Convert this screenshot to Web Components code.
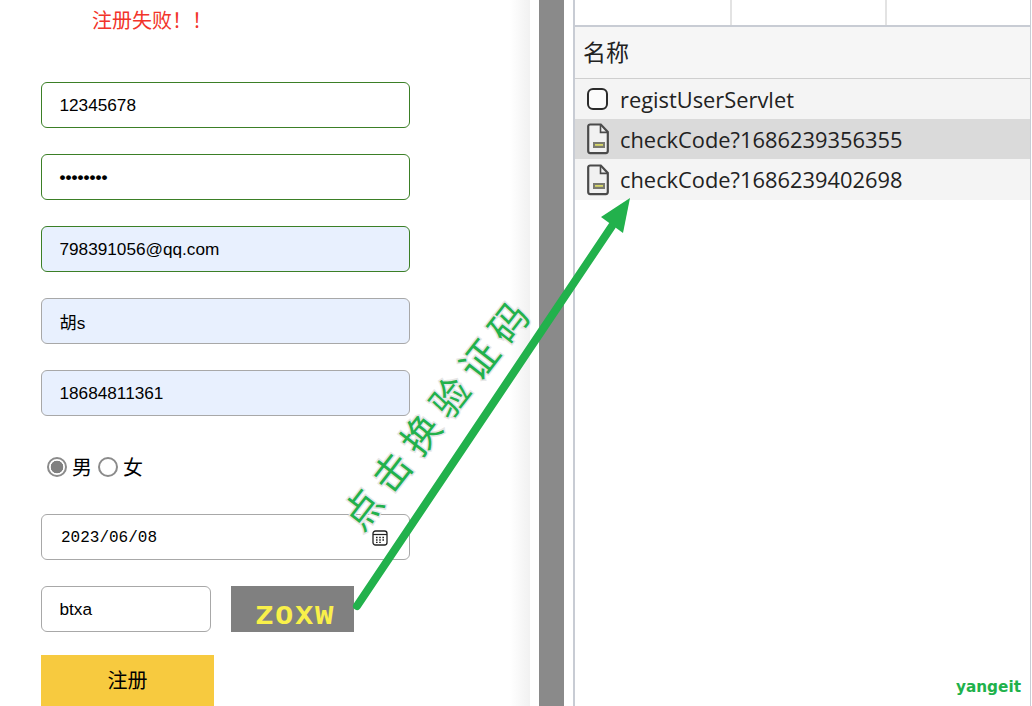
<!DOCTYPE html>
<html lang="zh">
<head>
<meta charset="utf-8">
<title>注册</title>
<style>
    html, body { margin: 0; height: 706px; overflow: hidden; background: #fff; }
</style>
</head>
<body>
<app-shell>
    <reg-panel slot="left">
        <reg-field tone="ok">12345678</reg-field>
        <reg-field tone="ok" kind="secret">••••••••</reg-field>
        <reg-field tone="ok" filled>798391056@qq.com</reg-field>
        <reg-field filled>胡s</reg-field>
        <reg-field filled>18684811361</reg-field>
        <reg-gender></reg-gender>
        <reg-field kind="date">2023/06/08</reg-field>
        <reg-captcha></reg-captcha>
        <reg-button>注册</reg-button>
    </reg-panel>
    <net-panel slot="right">
        <net-row icon="box">registUserServlet</net-row>
        <net-row icon="doc" selected>checkCode?1686239356355</net-row>
        <net-row icon="doc">checkCode?1686239402698</net-row>
    </net-panel>
</app-shell>
<arrow-note></arrow-note>

<script>
const CJK = '"Liberation Sans", "Noto Sans CJK SC", sans-serif';

class AppShell extends HTMLElement {
    connectedCallback() {
        this.attachShadow({ mode: 'open' });
        this.shadowRoot.innerHTML = `
            <style>
                :host { display: flex; height: 706px; font-family: ${CJK}; color: #000; }
                .left { width: 510px; flex: none; }
                .fade { width: 20px; flex: none; background: linear-gradient(90deg, #fff, #f1f1f1); }
                .gap { width: 9px; flex: none; background: #fff; }
                .bar { width: 25px; flex: none; background: #8a8a8a; }
                .right { flex: 1; min-width: 0; display: flex; }
            </style>
            <div class="left"><slot name="left"></slot></div>
            <div class="fade"></div>
            <div class="gap"></div>
            <div class="bar"></div>
            <div class="gap"></div>
            <div class="right"><slot name="right"></slot></div>
        `;
    }
}

class RegPanel extends HTMLElement {
    connectedCallback() {
        this.attachShadow({ mode: 'open' });
        this.shadowRoot.innerHTML = `
            <style>
                :host { display: block; width: 369px; padding-left: 41px; }
                .msg { height: 42px; line-height: 43px; margin-bottom: 40px; padding-left: 51px;
                    color: #f2342a; font-size: 20px; }
                .form { display: flex; flex-direction: column; gap: 26px; }
            </style>
            <div class="msg">注册失败！！</div>
            <div class="form"><slot></slot></div>
        `;
    }
}

class RegField extends HTMLElement {
    connectedCallback() {
        const kind = this.getAttribute('kind');
        const tone = this.getAttribute('tone') === 'ok' ? '#3b7f26' : '#a8a8a8';
        const bg = this.hasAttribute('filled') ? '#e8f0fe' : '#fff';
        this.attachShadow({ mode: 'open' });
        this.shadowRoot.innerHTML = `
            <style>
                :host { display: flex; align-items: center; justify-content: space-between; box-sizing: border-box;
                    height: 46px; padding: 1px 22px 0 17.5px; border: 1px solid ${tone}; border-radius: 6px;
                    background: ${bg}; font-size: 17.2px; }
                :host([kind="date"]) { font-family: "Liberation Mono", monospace; font-size: 16px; padding: 2px 22px 0 19px; }
                :host([kind="secret"]) { font-weight: bold; }
                svg { display: block; flex: none; }
            </style>
            <slot></slot>
            ${kind === 'date' ? `
            <svg width="16" height="16" viewBox="0 0 16 16" style="margin-right:-1px">
                <rect x="1" y="1" width="14" height="14" rx="2.5" fill="none" stroke="#222" stroke-width="1.3"/>
                <path d="M1 4.5h14" stroke="#222" stroke-width="1.2"/>
                <path d="M4 7.5h1.6M7.2 7.5h1.6M10.4 7.5h1.6M4 10h1.6M7.2 10h1.6M10.4 10h1.6M4 12.4h1.6M7.2 12.4h1.6" stroke="#222" stroke-width="1.4"/>
            </svg>` : ''}
        `;
    }
}

class RegGender extends HTMLElement {
    connectedCallback() {
        this.attachShadow({ mode: 'open' });
        this.shadowRoot.innerHTML = `
            <style>
                :host { display: flex; align-items: center; height: 46px; padding: 2px 0 0 6px; box-sizing: content-box;
                    margin-bottom: -2px; font-size: 20px; gap: 5px; }
                i { display: block; box-sizing: border-box; width: 20px; height: 20px; border: 2px solid #8b8b8b;
                    border-radius: 50%; background: #fff; }
                i.on { background: radial-gradient(circle, #808080 0 6px, #fff 6.6px); }
                span { margin: -2px 1px 0 0; }
            </style>
            <i class="on"></i><span>男</span>
            <i></i><span>女</span>
        `;
    }
}

class RegCaptcha extends HTMLElement {
    connectedCallback() {
        this.attachShadow({ mode: 'open' });
        this.shadowRoot.innerHTML = `
            <style>
                :host { display: flex; gap: 20px; height: 46px; }
                reg-field { width: 170px; }
                .code { width: 123px; height: 46px; box-sizing: border-box; padding: 15px 0 0 24px; background: #808080;
                    overflow: hidden; }
                .code span { display: block; color: #f9f04a; white-space: nowrap; transform: scaleX(1.27);
                    transform-origin: left; font: bold 24px/30px "DejaVu Sans Mono", monospace; letter-spacing: 1.3px; }
            </style>
            <reg-field>btxa</reg-field>
            <div class="code"><span>ZOXW</span></div>
        `;
    }
}

class RegButton extends HTMLElement {
    connectedCallback() {
        this.attachShadow({ mode: 'open' });
        this.shadowRoot.innerHTML = `
            <style>
                :host { display: flex; align-items: center; justify-content: center; box-sizing: border-box;
                    width: 173px; height: 51px; padding-bottom: 2px; margin-top: -3px; background: #f7ca3f; font-size: 20px; }
            </style>
            <slot></slot>
        `;
    }
}

class NetPanel extends HTMLElement {
    connectedCallback() {
        this.attachShadow({ mode: 'open' });
        this.shadowRoot.innerHTML = `
            <style>
                :host { display: flex; flex-direction: column; flex: 1; box-sizing: border-box; height: 706px;
                    border-left: 2px solid #c8ccd4; border-right: 1px solid #c8ccd4; margin-right: 1px;
                    background: #fff; color: #222; font-family: "Open Sans", "Noto Sans CJK SC", sans-serif; }
                .tabs { display: grid; grid-template-columns: 155px 155px 1fr; height: 25px; flex: none;
                    border-bottom: 2px solid #c8ccd4; }
                .tabs div + div { border-left: 2px solid #e3e3e3; }
                .head { height: 51px; line-height: 51px; flex: none; padding-left: 8px; background: #f6f6f6;
                    border-bottom: 1px solid #cfcfcf; font-size: 23px; }
                .logo { margin-top: auto; align-self: flex-end; padding: 0 9px 9px 0; color: #1fb24c;
                    font: bold 15.3px/20px "DejaVu Sans", sans-serif; }
                .rows { display: flex; flex-direction: column; }
            </style>
            <div class="tabs"><div></div><div></div><div></div></div>
            <div class="head">名称</div>
            <div class="rows"><slot></slot></div>
            <div class="logo">yangeit</div>
        `;
    }
}

class NetRow extends HTMLElement {
    connectedCallback() {
        const icon = this.getAttribute('icon') === 'box' ? `
            <svg width="24" height="32" viewBox="0 0 24 32">
                <rect x="2" y="6" width="19" height="20" rx="5" fill="#fbfbfb" stroke="#2b2b2b" stroke-width="2"/>
            </svg>` : `
            <svg width="24" height="32" viewBox="0 0 24 32">
                <path d="M2.2 3.5a2 2 0 0 1 2-2h10.6l7 7.4v19.2a2 2 0 0 1-2 2H4.2a2 2 0 0 1-2-2z" fill="#f1f1f1" stroke="#4a4a4a" stroke-width="2.2"/>
                <path d="M14.5 2v7.4h7" fill="none" stroke="#4a4a4a" stroke-width="1.6"/>
                <rect x="7" y="19" width="12" height="6" fill="#7a7a70"/>
                <rect x="9" y="21" width="8" height="1.8" fill="#d8d868"/>
            </svg>`;
        this.attachShadow({ mode: 'open' });
        this.shadowRoot.innerHTML = `
            <style>
                :host { display: flex; align-items: center; gap: 10px; height: 40px; padding-left: 11px;
                    background: #f4f4f4; font-size: 21.85px; }
                :host([selected]) { background: #dadada; }
                :host(:last-child) { height: 41px; }
                svg { flex: none; display: block; }
            </style>
            ${icon}
            <slot></slot>
        `;
    }
}

class ArrowNote extends HTMLElement {
    connectedCallback() {
        this.attachShadow({ mode: 'open' });
        this.shadowRoot.innerHTML = `
            <style>
                :host { position: absolute; left: 0; top: 0; width: 1032px; height: 706px; pointer-events: none; }
                svg { display: block; }
                text { font-family: "Noto Sans CJK SC", sans-serif; font-size: 38px; fill: #22b14c;
                    stroke: #e6e6e6; stroke-width: 3px; paint-order: stroke; letter-spacing: 9.4px; }
            </style>
            <svg width="1032" height="706" viewBox="0 0 1032 706">
                <path d="M357 606L612 226" stroke="#22b14c" stroke-width="8" stroke-linecap="round" fill="none"/>
                <path d="M630 198L601 217L623 233z" fill="#22b14c"/>
                <text transform="translate(362 533) rotate(-52)">点击换验证码</text>
            </svg>
        `;
    }
}

customElements.define('app-shell', AppShell);
customElements.define('reg-panel', RegPanel);
customElements.define('reg-field', RegField);
customElements.define('reg-gender', RegGender);
customElements.define('reg-captcha', RegCaptcha);
customElements.define('reg-button', RegButton);
customElements.define('net-panel', NetPanel);
customElements.define('net-row', NetRow);
customElements.define('arrow-note', ArrowNote);
</script>
</body>
</html>
